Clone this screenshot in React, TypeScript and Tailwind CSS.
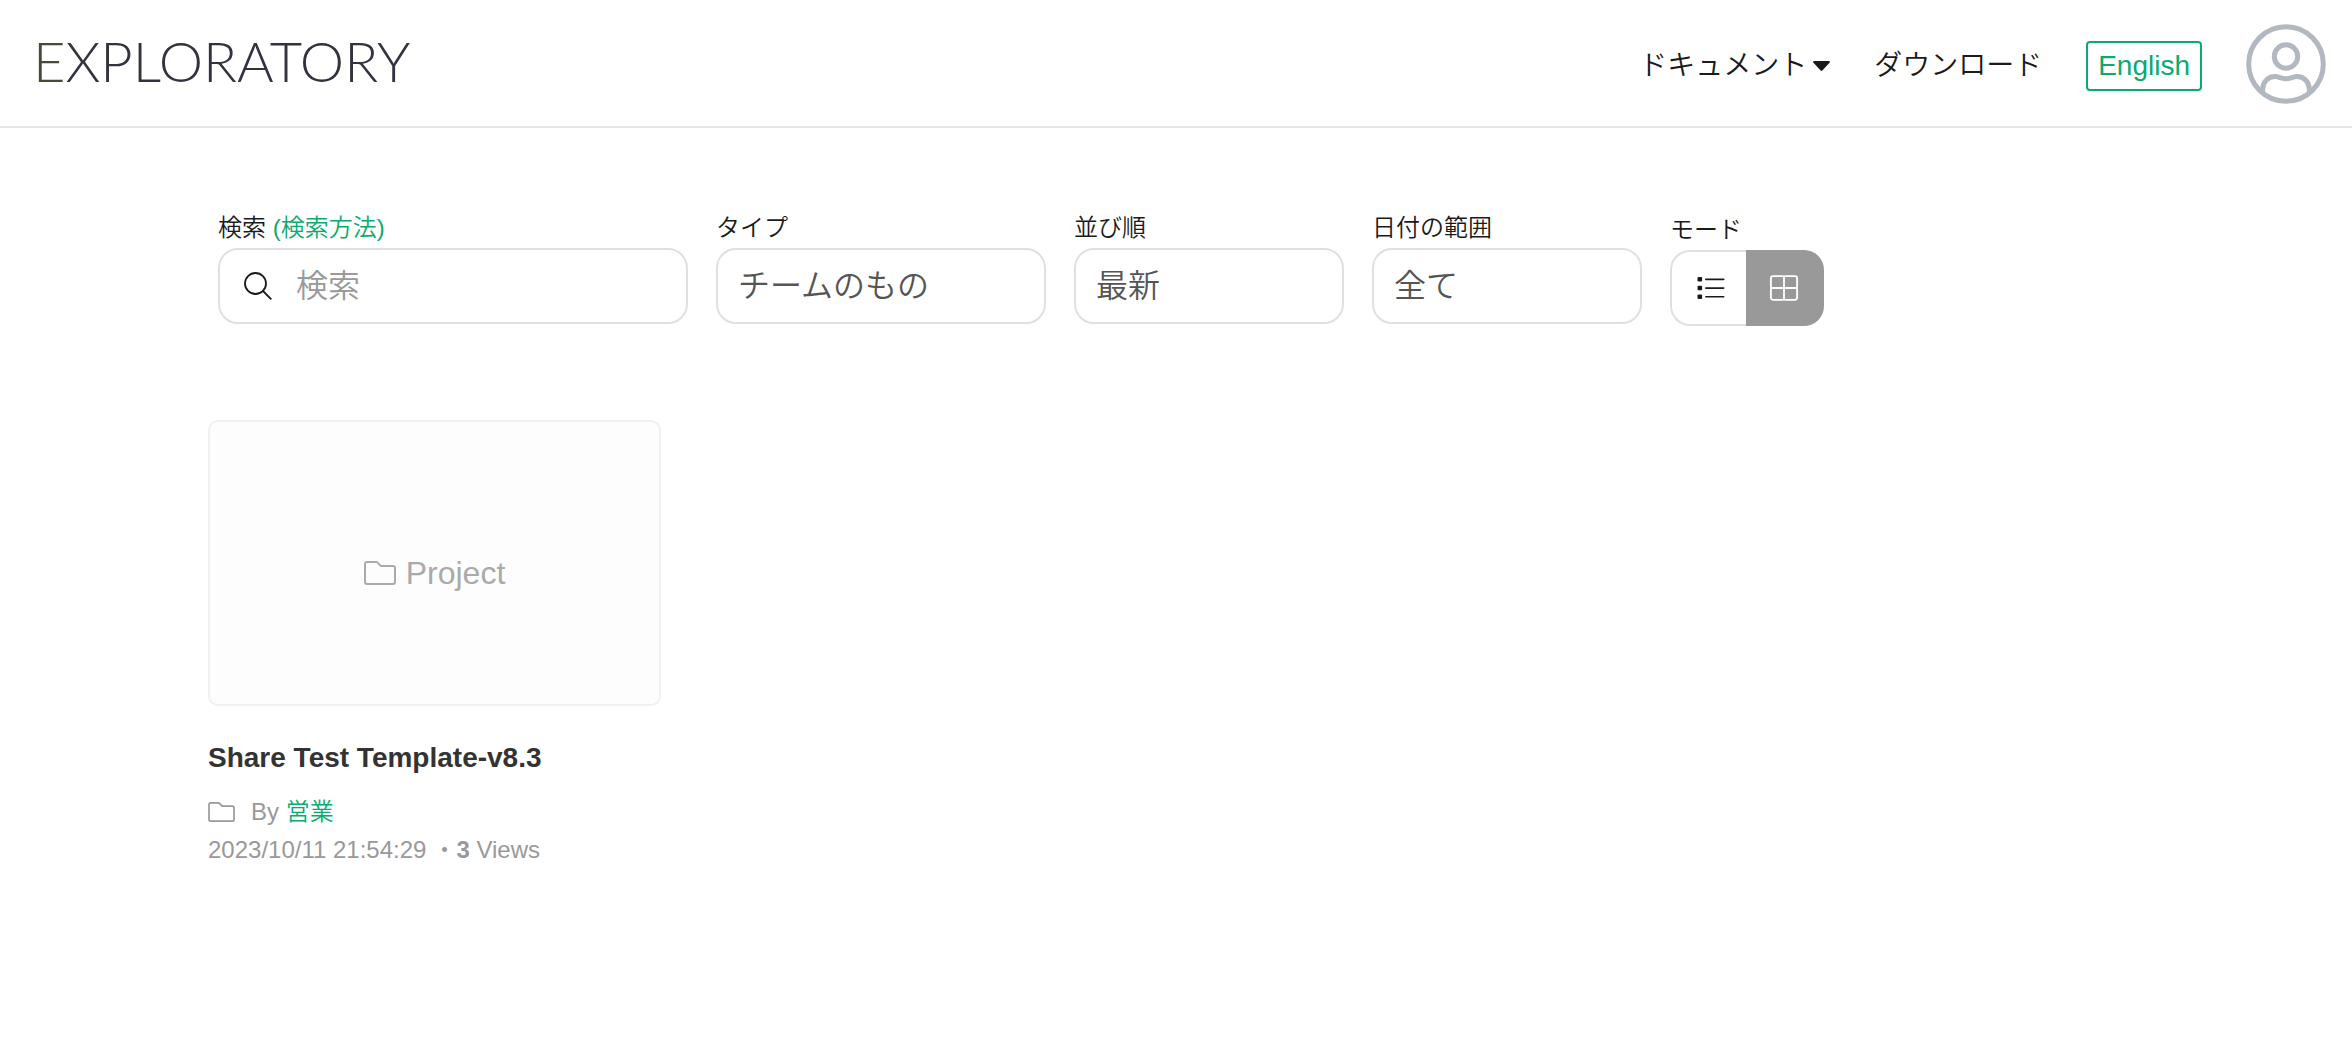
import { useState } from "react";

type SelectFieldProps = {
  id: string;
  label: string;
  options: string[];
  width: string;
};

type Project = {
  id: number;
  title: string;
  team: string;
  createdAt: string;
  views: number;
};

const projects: Project[] = [
  {
    id: 1,
    title: "Share Test Template-v8.3",
    team: "営業",
    createdAt: "2023/10/11 21:54:29",
    views: 3,
  },
];

function FolderIcon({ className }: { className: string }) {
  return (
    <svg className={className} viewBox="0 0 32 24" fill="none" stroke="currentColor" strokeWidth="2">
      <path d="M3 1H12.2C12.8 1 13.2 1.2 13.6 1.6L16.4 4.6C16.7 4.9 17 5 17.4 5H29C30.2 5 31 5.8 31 7V21C31 22.2 30.2 23 29 23H3C1.8 23 1 22.2 1 21V3C1 1.8 1.8 1 3 1Z" />
    </svg>
  );
}

function SearchIcon() {
  return (
    <svg className="h-7 w-7 shrink-0" viewBox="0 0 28 28" fill="none" stroke="#1a1a1a" strokeWidth="1.8">
      <circle cx="11.5" cy="11.5" r="10.5" />
      <path d="M19 19L27.3 27.3" />
    </svg>
  );
}

function UserIcon() {
  return (
    <svg className="h-20 w-20" viewBox="0 0 80 80" fill="none" stroke="#b1b8c0" strokeWidth="5">
      <circle cx="40" cy="40" r="37.3" />
      <circle cx="40" cy="32.5" r="11.7" />
      <path d="M16.6 68V65.5C16.6 58 22 52.6 29 52.6C33 52.6 35.5 54.7 40 54.7C44.5 54.7 47 52.6 51 52.6C58 52.6 63.4 58 63.4 65.5V68" />
    </svg>
  );
}

function SelectField({ id, label, options, width }: SelectFieldProps) {
  return (
    <div className={`flex flex-col gap-1 ${width}`}>
      <label htmlFor={id} className="text-2xl text-[#1a1a1a]">
        {label}
      </label>
      <select
        id={id}
        className="h-[76px] w-full appearance-none rounded-[20px] border-2 border-[#e0e0e0] bg-white px-5 text-[32px] text-[#555]"
      >
        {options.map((option) => (
          <option key={option}>{option}</option>
        ))}
      </select>
    </div>
  );
}

export default function App() {
  const [mode, setMode] = useState("grid");

  return (
    <div className="min-h-screen bg-white font-['Liberation_Sans','Noto_Sans_CJK_JP',sans-serif] font-[350]">
      {/* Header */}
      <header className="flex h-32 items-center justify-between border-b-2 border-[#e6e6e6] pt-0.5 pl-[33px] pr-[26px]">
        <a href="#" className="pb-1.5 font-[Lato,sans-serif] text-[56px] leading-[60px] font-light text-[#35313f]">
          <span className="text-[#4a4836]">E</span>XPLORATORY
        </a>

        <nav className="flex items-center gap-11 text-[28px] text-[#1a1a1a]">
          <div className="flex items-center gap-11 pt-1">
            <button className="flex items-center gap-1.5">
              ドキュメント
              <svg className="h-[10px] w-[17px]" viewBox="0 0 17 10" fill="currentColor">
                <path d="M1.2 0H15.8C16.8 0 17.2 1 16.5 1.7L9.6 9.3C9 10 8 10 7.4 9.3L.5 1.7C-.2 1 .2 0 1.2 0Z" />
              </svg>
            </button>
            <a href="#">ダウンロード</a>
            <button className="h-[50px] rounded-sm border-2 border-[#0aaa70] px-[10px] text-[#0aaa70]">
              English
            </button>
          </div>
          <button aria-label="アカウント">
            <UserIcon />
          </button>
        </nav>
      </header>

      <main className="mx-auto max-w-[1936px] pt-[84px] pb-20">
        {/* Filters */}
        <div className="flex items-start gap-7 px-[10px]">
          <div className="flex w-[470px] flex-col gap-1">
            <div className="text-2xl text-[#1a1a1a]">
              <label htmlFor="search">検索</label>{" "}
              <a href="#" className="text-[#0aaa70]">
                (検索方法)
              </a>
            </div>
            <div className="flex h-[76px] items-center gap-6 rounded-[20px] border-2 border-[#e0e0e0] px-6">
              <SearchIcon />
              <input
                id="search"
                type="text"
                placeholder="検索"
                className="w-full min-w-0 text-[32px] text-[#555] outline-none placeholder:text-[#999]"
              />
            </div>
          </div>

          <SelectField id="type" label="タイプ" options={["チームのもの"]} width="w-[330px]" />
          <SelectField id="sort" label="並び順" options={["最新"]} width="w-[270px]" />
          <SelectField id="range" label="日付の範囲" options={["全て"]} width="w-[270px]" />

          <div className="flex flex-col gap-1 pt-0.5">
            <span id="mode-label" className="text-2xl text-[#1a1a1a]">
              モード
            </span>
            <div role="group" aria-labelledby="mode-label" className="flex h-[76px]">
              <button
                aria-label="リスト"
                onClick={() => setMode("list")}
                className={`flex w-[76px] items-center justify-center rounded-l-[20px] border-2 border-r-0 pl-1 ${
                  mode === "list" ? "border-[#999] bg-[#999] text-white" : "border-[#e0e0e0] text-[#1a1a1a]"
                }`}
              >
                <svg className="h-6 w-7" viewBox="0 0 28 24" fill="currentColor">
                  <rect x="0.5" y="1" width="4.6" height="4.6" rx="1" />
                  <rect x="0.5" y="9.7" width="4.6" height="4.6" rx="1" />
                  <rect x="0.5" y="18.4" width="4.6" height="4.6" rx="1" />
                  <rect x="8" y="2.5" width="19.5" height="1.7" rx="0.8" />
                  <rect x="8" y="11.2" width="19.5" height="1.7" rx="0.8" />
                  <rect x="8" y="19.9" width="19.5" height="1.7" rx="0.8" />
                </svg>
              </button>
              <button
                aria-label="グリッド"
                onClick={() => setMode("grid")}
                className={`flex w-[78px] items-center justify-center rounded-r-[20px] border-2 border-l-0 ${
                  mode === "grid" ? "border-[#999] bg-[#999] text-white" : "border-[#e0e0e0] text-[#1a1a1a]"
                }`}
              >
                <svg className="h-[26px] w-7" viewBox="0 0 28 26" fill="none" stroke="currentColor" strokeWidth="1.8">
                  <rect x="0.9" y="1.2" width="26.2" height="23.6" rx="2.2" />
                  <path d="M14 1.2V24.8M0.8 13H27.2" />
                </svg>
              </button>
            </div>
          </div>
        </div>

        {/* Projects */}
        <div className="mt-[94px] flex flex-wrap gap-8">
          {projects.map((project) => (
            <article key={project.id} className="w-[453px] text-2xl text-[#999]">
              <a
                href="#"
                className="flex h-[286px] items-center justify-center gap-[10px] rounded-[10px] border-2 border-[#f0f0f0] bg-[#fdfdfd] pt-5 text-[32px] text-[#aaa]"
              >
                <FolderIcon className="h-6 w-8" />
                Project
              </a>
              <h2 className="mt-8 text-[28px] leading-10 font-bold text-[#333]">{project.title}</h2>
              <div className="mt-4 flex items-center leading-9">
                <FolderIcon className="mr-4 h-5 w-[27px]" />
                <span>
                  By{" "}
                  <a href="#" className="text-[#0aaa70]">
                    {project.team}
                  </a>
                </span>
              </div>
              <div className="flex items-center leading-10">
                <span>{project.createdAt}</span>
                <span className="ml-1.5">・</span>
                <span>
                  <b className="font-bold">{project.views}</b> Views
                </span>
              </div>
            </article>
          ))}
        </div>
      </main>
    </div>
  );
}
